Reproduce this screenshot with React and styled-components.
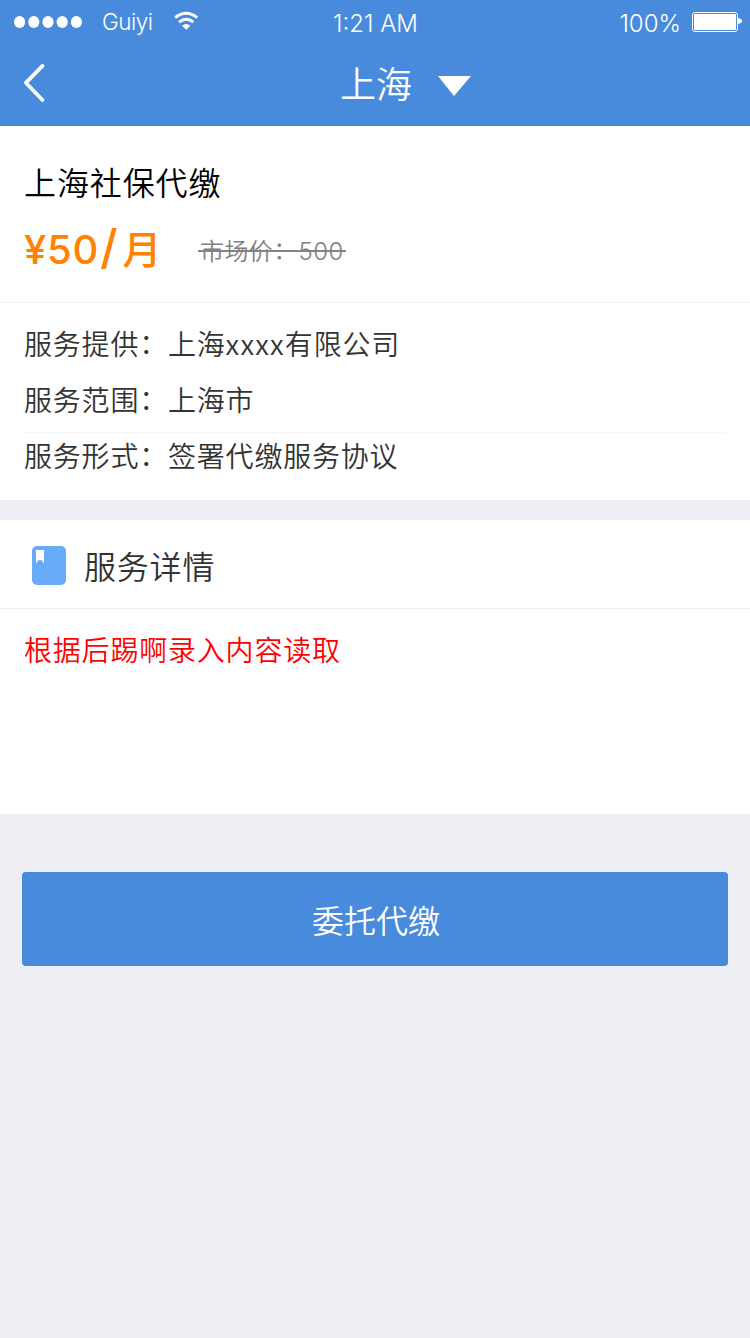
import React from "react";
import styled, { createGlobalStyle } from "styled-components";

const cjk = '"Noto Sans CJK SC", "Noto Sans", sans-serif';
const latin = 'Inter, "Noto Sans CJK SC", sans-serif';

const GlobalStyle = createGlobalStyle`
  * { box-sizing: border-box; }
  body { margin: 0; background: #eeeff4; font-family: ${cjk}; font-weight: 350; }
  h1, h2, p, dl, dt, dd { margin: 0; font-weight: inherit; }
`;

const Page = styled.main`
  width: 750px;
  min-height: 1338px;
  background: #eeeff4;
  color: #333;
`;

const Header = styled.header`
  height: 126px;
  background: #488adb;
  color: #fff;
`;

const StatusBar = styled.div`
  display: grid;
  grid-template-columns: 319px 1fr auto;
  height: 42px;
  padding: 0 8px 0 14px;
  font-family: ${latin};
  font-weight: 300;
`;

const Carrier = styled.div`
  display: flex;
  align-items: flex-start;
`;

const Dots = styled.svg`
  margin-top: 15px;
  margin-right: 19px;
`;

const Wifi = styled.svg`
  margin-top: 11px;
  margin-left: 21px;
`;

const StatusText = styled.span`
  font-size: ${(p) => p.$size}px;
  line-height: 30px;
  padding-top: ${(p) => p.$top}px;
  letter-spacing: ${(p) => p.$spacing || 0}px;
  white-space: nowrap;
`;

const Power = styled.div`
  display: flex;
  justify-content: flex-end;
  align-items: flex-start;
`;

const Battery = styled.svg`
  margin-top: 11px;
  margin-left: 10px;
`;

const NavBar = styled.nav`
  display: grid;
  grid-template-columns: 340px 1fr;
  height: 84px;
`;

const BackButton = styled.button`
  display: flex;
  align-items: flex-start;
  padding: 20px 0 0 22px;
  border: 0;
  background: none;
`;

const CityPicker = styled.div`
  display: flex;
  align-items: flex-start;
  gap: 25px;
  font-size: 36px;
  font-weight: 350;
  line-height: 52px;
  padding-top: 14px;
`;

const Caret = styled.svg`
  margin-top: 20px;
`;

const Summary = styled.section`
  height: 177px;
  padding: 32px 24px 0;
  background: #fff;
  border-bottom: 1px solid #f0f0f2;
`;

const Title = styled.h1`
  font-size: 32px;
  line-height: 46px;
  letter-spacing: 0.9px;
  color: #000;
`;

const PriceRow = styled.div`
  display: flex;
  align-items: flex-start;
  height: 60px;
`;

const Price = styled.div`
  width: 174px;
  padding-top: 13px;
  font-family: ${latin};
  font-size: 40px;
  font-weight: 500;
  line-height: 60px;
  letter-spacing: 0.8px;
  color: #ff8200;
  white-space: nowrap;
`;

const Slash = styled.span`
  font-size: 47px;
  line-height: 1;
  margin-left: 1px;
`;

const PriceUnit = styled.span`
  font-family: ${cjk};
  font-size: 39px;
  font-weight: 500;
  margin-left: 4px;
`;

const MarketPrice = styled.del`
  display: flex;
  width: 148px;
  margin-top: 28px;
  padding: 0 2px;
  font-size: 24px;
  font-weight: 350;
  line-height: 36px;
  letter-spacing: 0.4px;
  color: #808080;
  text-decoration: none;
  white-space: nowrap;
  background: linear-gradient(#858585, #858585) 0 18px / 100% 2px no-repeat;
`;

const MarketAmount = styled.span`
  padding: 2px 0 0 1px;
  font-family: ${latin};
  font-weight: 300;
`;

const Colon = styled.span`
  display: inline-block;
  line-height: 1;
  vertical-align: 1px;
`;

const Facts = styled.dl`
  height: 197px;
  padding: 12px 23px 0 24px;
  background: #fff;
`;

const Fact = styled.div`
  display: grid;
  grid-template-columns: 144px 1fr;
  height: 56px;
  padding-top: 7px;
  font-size: 28px;
  line-height: 42px;
  letter-spacing: 0.8px;
  white-space: nowrap;
  box-shadow: ${(p) => (p.$divided ? "0 5px 0 0 #fff, 0 6px 0 0 #f8f8f9" : "none")};
`;

const CompanyCode = styled.span`
  letter-spacing: 1.2px;
`;

const Detail = styled.section`
  height: 294px;
  margin-top: 20px;
  background: #fff;
`;

const DetailHead = styled.div`
  display: flex;
  height: 89px;
  padding: 0 24px 0 32px;
  border-bottom: 1px solid #f0f0f2;
`;

const BookIcon = styled.svg`
  margin: 26px 18px 0 0;
`;

const DetailTitle = styled.h2`
  padding-top: 22px;
  font-size: 32px;
  line-height: 46px;
  letter-spacing: 0.8px;
`;

const DetailText = styled.p`
  padding: 19px 24px 0;
  font-size: 28px;
  line-height: 42px;
  letter-spacing: 0.8px;
  color: #ff0000;
`;

const SubmitButton = styled.button`
  display: block;
  width: 706px;
  height: 94px;
  margin: 58px 22px 0;
  padding: 0 0 1px 2px;
  border: 0;
  border-radius: 4px;
  background: #488adb;
  color: #fff;
  font-family: ${cjk};
  font-size: 32px;
  font-weight: 350;
`;

const facts = [
  { label: "服务提供", value: <>上海<CompanyCode>xxxx</CompanyCode>有限公司</> },
  { label: "服务范围", value: "上海市", divided: true },
  { label: "服务形式", value: "签署代缴服务协议" },
];

export default function App() {
  return (
    <Page>
      <GlobalStyle />
      <Header>
        <StatusBar>
          <Carrier>
            <Dots width="69" height="14" fill="#fff">
              {[5.6, 19.8, 34, 48.2, 62.4].map((x) => (
                <ellipse key={x} cx={x} cy="7" rx="5.6" ry="6.1" />
              ))}
            </Dots>
            <StatusText $size={22.5} $top={7} $spacing={-0.5}>Guiyi</StatusText>
            <Wifi width="25" height="20" viewBox="0 0 25 20" fill="none">
              <path d="M1.2 6.6Q12.2 -2 23.2 6.6" stroke="#fff" strokeWidth="3" />
              <path d="M5 11.2Q12.2 5.3 19.4 11.2" stroke="#fff" strokeWidth="3" />
              <path d="M8 14.7Q12.2 11.4 16.4 14.7L12.2 18.8Z" fill="#fff" />
            </Wifi>
          </Carrier>
          <StatusText $size={24} $top={9}>1:21 AM</StatusText>
          <Power>
            <StatusText $size={24} $top={9}>100%</StatusText>
            <Battery width="51" height="22" viewBox="0 0 51 22">
              <rect x="1.5" y="1.5" width="45" height="19" rx="2.5" fill="none" stroke="#fff" />
              <rect x="3" y="3" width="42" height="16" rx="1" fill="#fff" />
              <path d="M47 7Q51 8 51 10T47 13Z" fill="#fff" />
            </Battery>
          </Power>
        </StatusBar>
        <NavBar>
          <BackButton aria-label="返回">
            <svg width="24" height="42" viewBox="0 0 24 42" fill="none">
              <path d="M20.5 3.8L3.8 20.8L20.5 38" stroke="#fff" strokeWidth="3.8" strokeLinecap="round" strokeLinejoin="round" />
            </svg>
          </BackButton>
          <CityPicker>
            <span>上海</span>
            <Caret width="35" height="20" viewBox="0 0 35 20">
              <path d="M1 0H34L17 20Z" fill="#fff" />
            </Caret>
          </CityPicker>
        </NavBar>
      </Header>

      <Summary>
        <Title>上海社保代缴</Title>
        <PriceRow>
          <Price>¥50<Slash>/</Slash><PriceUnit>月</PriceUnit></Price>
          <MarketPrice>
            <span>市场价<Colon>：</Colon></span>
            <MarketAmount>500</MarketAmount>
          </MarketPrice>
        </PriceRow>
      </Summary>

      <Facts>
        {facts.map((f) => (
          <Fact key={f.label} $divided={f.divided}>
            <dt>{f.label}<Colon>：</Colon></dt>
            <dd>{f.value}</dd>
          </Fact>
        ))}
      </Facts>

      <Detail>
        <DetailHead>
          <BookIcon width="34" height="39" viewBox="0 0 34 39">
            <rect width="34" height="39" rx="5" fill="#68abf9" />
            <path d="M4 4H12V17.5L10 14.5Q8 13.5 6 14.5L4 17.5Z" fill="#fff" />
          </BookIcon>
          <DetailTitle>服务详情</DetailTitle>
        </DetailHead>
        <DetailText>根据后踢啊录入内容读取</DetailText>
      </Detail>

      <SubmitButton>委托代缴</SubmitButton>
    </Page>
  );
}
